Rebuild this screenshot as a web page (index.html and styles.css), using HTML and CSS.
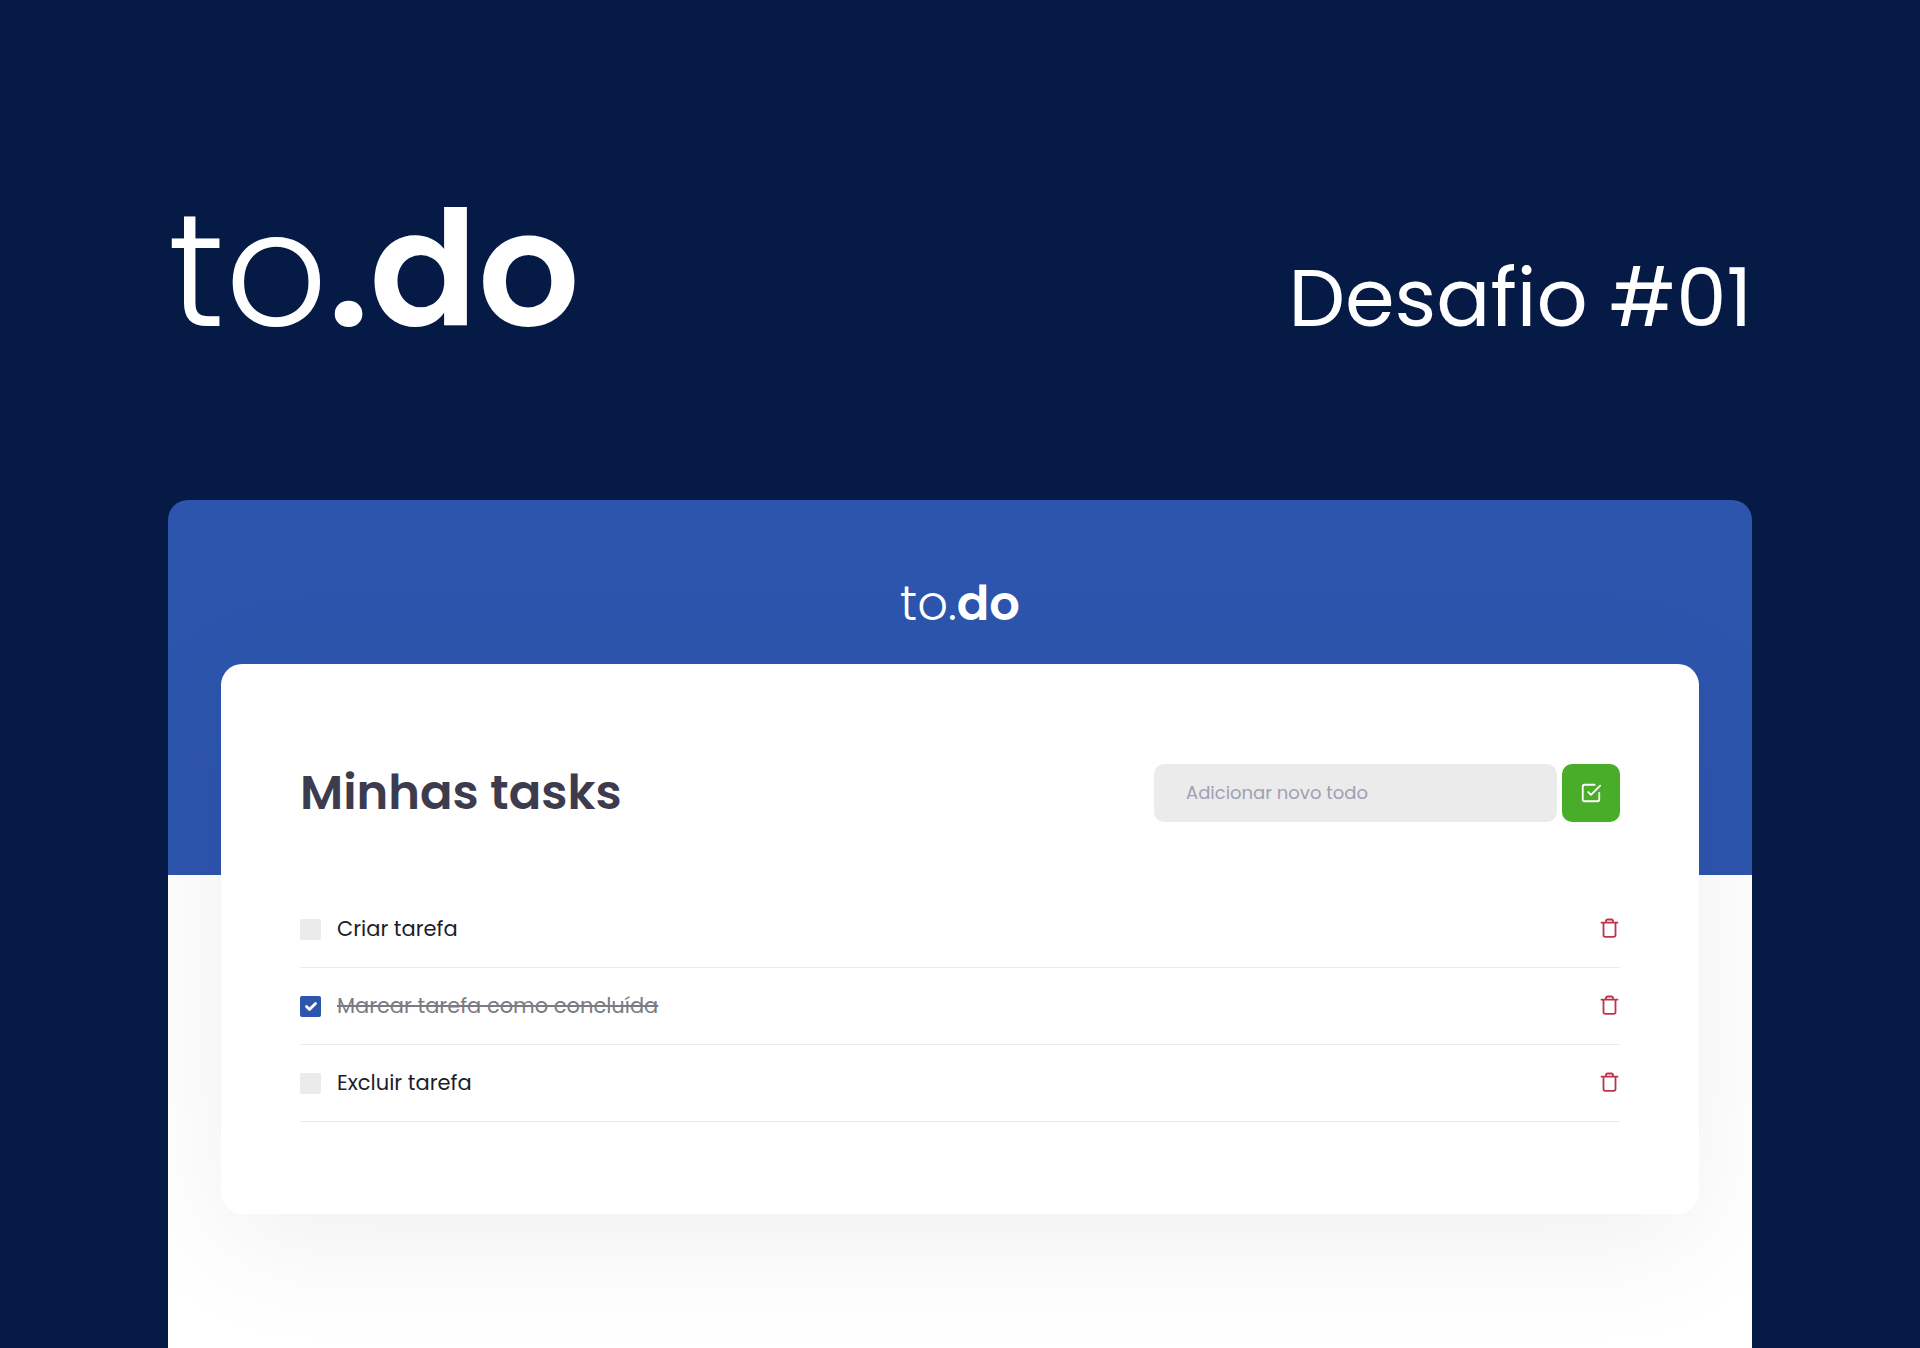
FILE: index.html
```html
<!DOCTYPE html>
<html lang="pt-BR">
<head>
<meta charset="utf-8">
<meta name="viewport" content="width=device-width, initial-scale=1">
<title>to.do</title>
<link rel="stylesheet" href="styles.css">
</head>
<body>
<header class="cover">
  <h1 class="cover-logo">to<strong>.do</strong></h1>
  <p class="cover-label">Desafio #01</p>
</header>
<div class="app">
  <header class="app-header"><p class="app-logo">to.<strong>do</strong></p></header>
  <main class="card">
    <div class="card-top">
      <h2 class="title">Minhas tasks</h2>
      <form class="new-task">
        <input class="new-task-input" type="text" placeholder="Adicionar novo todo" aria-label="Adicionar novo todo">
        <button class="new-task-button" type="submit" aria-label="Adicionar">
          <svg width="22" height="22" viewBox="0 0 24 24" fill="none" stroke="currentColor" stroke-width="2" stroke-linecap="round" stroke-linejoin="round"><path d="M9 11l3 3L22 4"/><path d="M21 12v7a2 2 0 0 1-2 2H5a2 2 0 0 1-2-2V5a2 2 0 0 1 2-2h11"/></svg>
        </button>
      </form>
    </div>
    <ul class="tasks">
      <li class="task">
        <label class="task-label">
          <span class="check"><input class="check-input" type="checkbox"><svg class="check-mark" viewBox="0 0 21 21"><path d="M6.5 10.500l3 3 6-6"/></svg></span>
          <span class="task-text">Criar tarefa</span>
        </label>
        <button class="remove" type="button" aria-label="Excluir Criar tarefa"><svg width="22" height="22" viewBox="0 0 22 22"><path d="M3.500 4.700h16M8 4.500V3.300C8 2 8.600 1.500 9.700 1.500h3.600c1.100 0 1.700.5 1.700 1.800v1.200M5.500 4.700V17c0 1.300.7 1.800 1.800 1.800h8.400c1.100 0 1.800-.5 1.800-1.800V4.700"/></svg></button>
      </li>
      <li class="task">
        <label class="task-label">
          <span class="check"><input class="check-input" type="checkbox" checked><svg class="check-mark" viewBox="0 0 21 21"><path d="M6.500 10.500l3 3 6-6"/></svg></span>
          <span class="task-text">Marcar tarefa como concluída</span>
        </label>
        <button class="remove" type="button" aria-label="Excluir Marcar tarefa como concluída"><svg width="22" height="22" viewBox="0 0 22 22"><path d="M3.500 4.700h16M8 4.500V3.300C8 2 8.600 1.500 9.700 1.500h3.600c1.100 0 1.700.5 1.700 1.800v1.200M5.500 4.700V17c0 1.300.7 1.800 1.800 1.800h8.400c1.100 0 1.800-.5 1.800-1.800V4.700"/></svg></button>
      </li>
      <li class="task">
        <label class="task-label">
          <span class="check"><input class="check-input" type="checkbox"><svg class="check-mark" viewBox="0 0 21 21"><path d="M6.500 10.500l3 3 6-6"/></svg></span>
          <span class="task-text">Excluir tarefa</span>
        </label>
        <button class="remove" type="button" aria-label="Excluir Excluir tarefa"><svg width="22" height="22" viewBox="0 0 22 22"><path d="M3.500 4.700h16M8 4.500V3.300C8 2 8.600 1.500 9.700 1.500h3.600c1.100 0 1.700.5 1.700 1.800v1.200M5.500 4.700V17c0 1.300.7 1.800 1.800 1.800h8.400c1.100 0 1.800-.5 1.800-1.800V4.700"/></svg></button>
      </li>
    </ul>
  </main>
</div>
</body>
</html>
```
FILE: styles.css
```css
* { box-sizing: border-box; margin: 0; padding: 0; }

body {
  display: flex;
  flex-direction: column;
  min-height: 100vh;
  padding: 0 168px;
  background: #061a46;
  font-family: Poppins, Inter, "Open Sans", sans-serif;
}

input, button { font: inherit; border: 0; }
button { cursor: pointer; }

.cover {
  display: flex;
  justify-content: space-between;
  align-items: baseline;
  padding: 190px 0 150px;
  color: #fff;
}
.cover-logo { font-size: 160px; line-height: 160px; font-weight: 300; }
.cover-logo strong { font-weight: 600; }
.cover-label { font-size: 80px; line-height: 96px; }

.app {
  flex: 1;
  overflow: hidden;
  border-radius: 20px 20px 0 0;
  background: linear-gradient(#2d55ad 375px, #fff 375px);
}
.app-header {
  display: flex;
  justify-content: center;
  height: 375px;
  padding-top: 80px;
}
.app-logo { color: #fff; font-size: 48px; line-height: 48px; font-weight: 300; }
.app-logo strong { font-weight: 600; }

.card {
  margin: -211px 53px 134px;
  padding: 100px 79px 92px;
  border-radius: 21px;
  background: #fff;
  box-shadow: 0 26px 132px rgba(0, 0, 0, 0.066);
}
.card-top {
  display: flex;
  justify-content: space-between;
  align-items: center;
  margin-bottom: 69px;
}
.title { color: #3d3b4e; font-size: 48px; line-height: 58px; font-weight: 600; }

.new-task { display: flex; gap: 5px; }
.new-task-input {
  width: 403px;
  height: 58px;
  padding: 0 32px 2px;
  border-radius: 10px;
  background: #ebebeb;
  color: #1e1d2b;
  font-size: 18px;
}
.new-task-input::placeholder { color: #a09fb3; opacity: 1; }
.new-task-button {
  display: grid;
  place-items: center;
  width: 58px;
  height: 58px;
  border-radius: 10px;
  background: #49ad29;
  color: #fff;
}

.tasks { list-style: none; }
.task {
  display: flex;
  justify-content: space-between;
  align-items: center;
  height: 77px;
  border-bottom: 1px solid #ebebeb;
}
.task-label { display: flex; align-items: center; gap: 16px; cursor: pointer; }
.task-text { color: #1e1d2b; font-size: 21px; line-height: 32px; }

.check { display: grid; width: 21px; height: 21px; }
.check-input, .check-mark { grid-area: 1 / 1; width: 21px; height: 21px; }
.check-input { appearance: none; border-radius: 2px; background: #ebebeb; }
.check-input:checked { background: #2d55ad; }
.check-mark {
  display: none;
  pointer-events: none;
  fill: none;
  stroke: #fff;
  stroke-width: 2.8;
  stroke-linecap: round;
  stroke-linejoin: round;
}
.check-input:checked + .check-mark { display: block; }
.check:has(:checked) + .task-text { color: #7c7b83; text-decoration: line-through; }

.remove { display: flex; background: none; }
.remove svg { fill: none; stroke: #bd3348; stroke-width: 1.8; stroke-linecap: round; stroke-linejoin: round; }
```
